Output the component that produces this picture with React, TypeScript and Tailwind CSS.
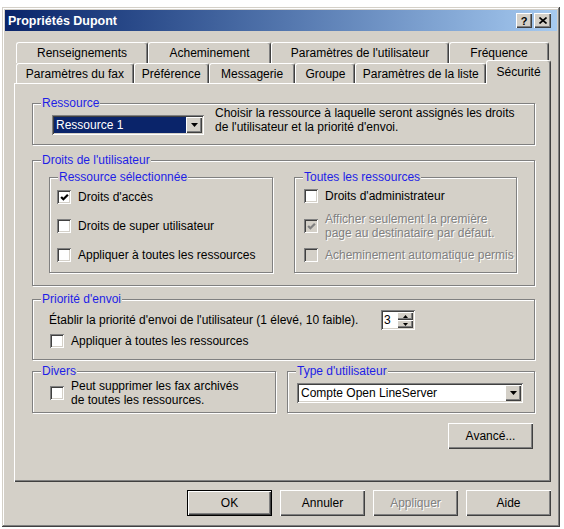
import type { ReactNode } from 'react'

const raised =
  'shadow-[inset_1px_1px_0_#fff,inset_-1px_-1px_0_#404040,inset_-2px_-2px_0_#808080]'
const sunken =
  'shadow-[inset_1px_1px_0_#808080,inset_-1px_-1px_0_#fff,inset_2px_2px_0_#404040,inset_-2px_-2px_0_#d4d0c8]'

function Group({ label, className, children }: { label: string; className: string; children?: ReactNode }) {
  return (
    <div className={`relative border border-[#808080] shadow-[inset_1px_1px_0_#fff,1px_1px_0_#fff] ${className}`}>
      <span className="absolute -top-[8px] left-[8px] bg-[#d4d0c8] px-[1px] leading-[14px] text-[#1e1ee6]">
        {label}
      </span>
      {children}
    </div>
  )
}

function Check({ checked, disabled }: { checked?: boolean; disabled?: boolean }) {
  return (
    <span
      className={`flex h-[14px] w-[14px] shrink-0 items-center justify-center ${sunken} ${
        disabled ? 'bg-[#d4d0c8]' : 'bg-white'
      }`}
    >
      {checked && (
        <svg width="9" height="9" viewBox="0 0 8 8">
          <polyline
            points="1,3.5 3,5.5 7,1.5"
            fill="none"
            stroke={disabled ? '#808080' : '#000'}
            strokeWidth="2"
          />
        </svg>
      )}
    </span>
  )
}

function CheckRow({
  label,
  checked,
  disabled,
  className = '',
}: {
  label: ReactNode
  checked?: boolean
  disabled?: boolean
  className?: string
}) {
  return (
    <div className={`flex items-center gap-[7px] ${className}`}>
      <Check checked={checked} disabled={disabled} />
      <span className={disabled ? 'text-[#808080] [text-shadow:1px_1px_0_#fff]' : ''}>{label}</span>
    </div>
  )
}

function DownArrow({ size = 'big' }: { size?: 'big' | 'small' }) {
  return size === 'big' ? (
    <svg width="7" height="4" viewBox="0 0 7 4">
      <polygon points="0,0 7,0 3.5,4" fill="#000" />
    </svg>
  ) : (
    <svg width="5" height="3" viewBox="0 0 5 3">
      <polygon points="0,0 5,0 2.5,3" fill="#000" />
    </svg>
  )
}

function Combo({ value, selected, className }: { value: string; selected?: boolean; className: string }) {
  return (
    <div className={`flex h-[20px] bg-white p-[2px] ${sunken} ${className}`}>
      <div
        className={`flex flex-1 items-center pl-[2px] ${selected ? 'bg-[#0a246a] text-white' : 'text-black'}`}
      >
        {value}
      </div>
      <div className={`flex w-[16px] items-center justify-center bg-[#d4d0c8] ${raised}`}>
        <DownArrow />
      </div>
    </div>
  )
}

function Spin() {
  return (
    <div className={`flex h-[20px] w-[34px] bg-white p-[2px] ${sunken}`}>
      <div className="flex flex-1 items-center pl-[1px]">3</div>
      <div className="flex w-[16px] flex-col">
        <div className={`flex flex-1 items-center justify-center bg-[#d4d0c8] ${raised}`}>
          <svg width="5" height="3" viewBox="0 0 5 3">
            <polygon points="0,3 5,3 2.5,0" fill="#000" />
          </svg>
        </div>
        <div className={`flex flex-1 items-center justify-center bg-[#d4d0c8] ${raised}`}>
          <DownArrow size="small" />
        </div>
      </div>
    </div>
  )
}

function Button({ label, isDefault, disabled }: { label: string; isDefault?: boolean; disabled?: boolean }) {
  return (
    <div
      className={`flex h-[26px] w-[85px] items-center justify-center bg-[#d4d0c8] ${
        isDefault ? 'border border-black' : ''
      } ${raised} ${disabled ? 'text-[#808080] [text-shadow:1px_1px_0_#fff]' : ''}`}
    >
      {label}
    </div>
  )
}

function Tab({ label, w, selected }: { label: string; w: string; selected?: boolean }) {
  if (selected) {
    return (
      <div
        className={`relative z-10 -mb-[1px] flex h-[24px] items-start justify-center rounded-t-[3px] border-l border-t border-r border-white border-r-[#404040] bg-[#d4d0c8] pt-[4px] shadow-[inset_-1px_0_0_#808080] ${w}`}
      >
        {label}
      </div>
    )
  }
  return (
    <div
      className={`flex h-full items-center justify-center rounded-t-[3px] border-l border-t border-r border-white border-r-[#404040] shadow-[inset_-1px_0_0_#808080] ${w}`}
    >
      {label}
    </div>
  )
}

export default function App() {
  return (
    <div className="h-[529px] w-[564px] overflow-hidden bg-white pl-[2px] pt-[7px] font-['Liberation_Sans',Arial,sans-serif] text-[12px] leading-[14px] text-black">
      <div className="flex h-[520px] w-[558px] flex-col bg-[#d4d0c8] p-[3px] shadow-[inset_-1px_-1px_0_#404040,inset_1px_1px_0_#d4d0c8,inset_-2px_-2px_0_#808080,inset_2px_2px_0_#fff]">
        {/* barre de titre */}
        <div className="flex h-[21px] shrink-0 items-center bg-linear-to-r from-[#0a246a] to-[#a6caf0] pl-[3px] pr-[6px]">
          <span className="text-[12.5px] font-bold text-white">Propriétés Dupont</span>
          <div className="ml-auto flex gap-[1px]">
            <div className={`flex h-[15px] w-[16px] items-center justify-center bg-[#d4d0c8] text-[11px] font-bold ${raised}`}>
              ?
            </div>
            <div className={`ml-[1px] flex h-[15px] w-[17px] items-center justify-center bg-[#d4d0c8] ${raised}`}>
              <svg width="8" height="7" viewBox="0 0 8 7">
                <path d="M0.5 0.5 L7.5 6.5 M7.5 0.5 L0.5 6.5" stroke="#000" strokeWidth="1.6" />
              </svg>
            </div>
          </div>
        </div>

        <div className="flex flex-1 flex-col pl-[9px] pr-[6px] pt-[11px]">
          {/* onglets */}
          <div className="flex h-[21px] pl-[2px]">
            <Tab label="Renseignements" w="w-[132px]" />
            <Tab label="Acheminement" w="w-[123px]" />
            <Tab label="Paramètres de l'utilisateur" w="w-[178px]" />
            <Tab label="Fréquence" w="w-[100px]" />
          </div>
          <div className="flex h-[20px] items-end pl-[2px]">
            <Tab label="Paramètres du fax" w="w-[118px]" />
            <Tab label="Préférence" w="w-[75px]" />
            <Tab label="Messagerie" w="w-[87px]" />
            <Tab label="Groupe" w="w-[60px]" />
            <Tab label="Paramètres de la liste" w="w-[131px]" />
            <Tab label="Sécurité" w="w-[65px]" selected />
          </div>

          {/* panneau */}
          <div className="flex h-[399px] flex-col pl-[18px] pr-[16px] pt-[20px] shadow-[inset_1px_1px_0_#fff,inset_-1px_-1px_0_#404040,inset_-2px_-2px_0_#808080]">
            <Group label="Ressource" className="h-[42px]">
              <div className="flex items-start pl-[19px] pt-[2px]">
                <Combo value="Ressource 1" selected className="mt-[9px] w-[152px]" />
                <p className="ml-[11px]">
                  Choisir la ressource à laquelle seront assignés les droits
                  <br />
                  de l'utilisateur et la priorité d'envoi.
                </p>
              </div>
            </Group>

            <Group label="Droits de l'utilisateur" className="mt-[15px] h-[126px]">
              <div className="flex gap-[21px] pl-[16px] pt-[16px]">
                <Group label="Ressource sélectionnée" className="h-[96px] w-[224px]">
                  <div className="flex flex-col gap-[15px] pl-[7px] pt-[12px]">
                    <CheckRow label="Droits d'accès" checked />
                    <CheckRow label="Droits de super utilisateur" />
                    <CheckRow label="Appliquer à toutes les ressources" />
                  </div>
                </Group>
                <Group label="Toutes les ressources" className="h-[96px] w-[223px]">
                  <div className="flex flex-col pl-[9px] pt-[11px]">
                    <CheckRow label="Droits d'administrateur" />
                    <CheckRow
                      className="mt-[9px]"
                      checked
                      disabled
                      label={
                        <>
                          Afficher seulement la première
                          <br />
                          page au destinataire par défaut.
                        </>
                      }
                    />
                    <CheckRow className="mt-[8px]" disabled label="Acheminement automatique permis" />
                  </div>
                </Group>
              </div>
            </Group>

            <Group label="Priorité d'envoi" className="mt-[13px] h-[61px]">
              <div className="flex items-center pl-[16px] pt-[10px]">
                <span className="w-[332px]">Établir la priorité d'envoi de l'utilisateur (1 élevé, 10 faible).</span>
                <Spin />
              </div>
              <CheckRow className="mt-[4px] pl-[17px]" label="Appliquer à toutes les ressources" />
            </Group>

            <div className="mt-[11px] flex gap-[11px]">
              <Group label="Divers" className="h-[42px] w-[244px]">
                <CheckRow
                  className="pl-[17px] pt-[7px]"
                  label={
                    <>
                      Peut supprimer les fax archivés
                      <br />
                      de toutes les ressources.
                    </>
                  }
                />
              </Group>
              <Group label="Type d'utilisateur" className="h-[42px] w-[248px]">
                <div className="pl-[9px] pt-[11px]">
                  <Combo value="Compte Open LineServer" className="w-[226px]" />
                </div>
              </Group>
            </div>

            <div className="mr-[2px] mt-[10px] self-end">
              <Button label="Avancé..." />
            </div>
          </div>

          {/* boutons */}
          <div className="flex justify-end gap-[8px] pt-[8px]">
            <Button label="OK" isDefault />
            <Button label="Annuler" />
            <Button label="Appliquer" disabled />
            <Button label="Aide" />
          </div>
        </div>
      </div>
    </div>
  )
}
